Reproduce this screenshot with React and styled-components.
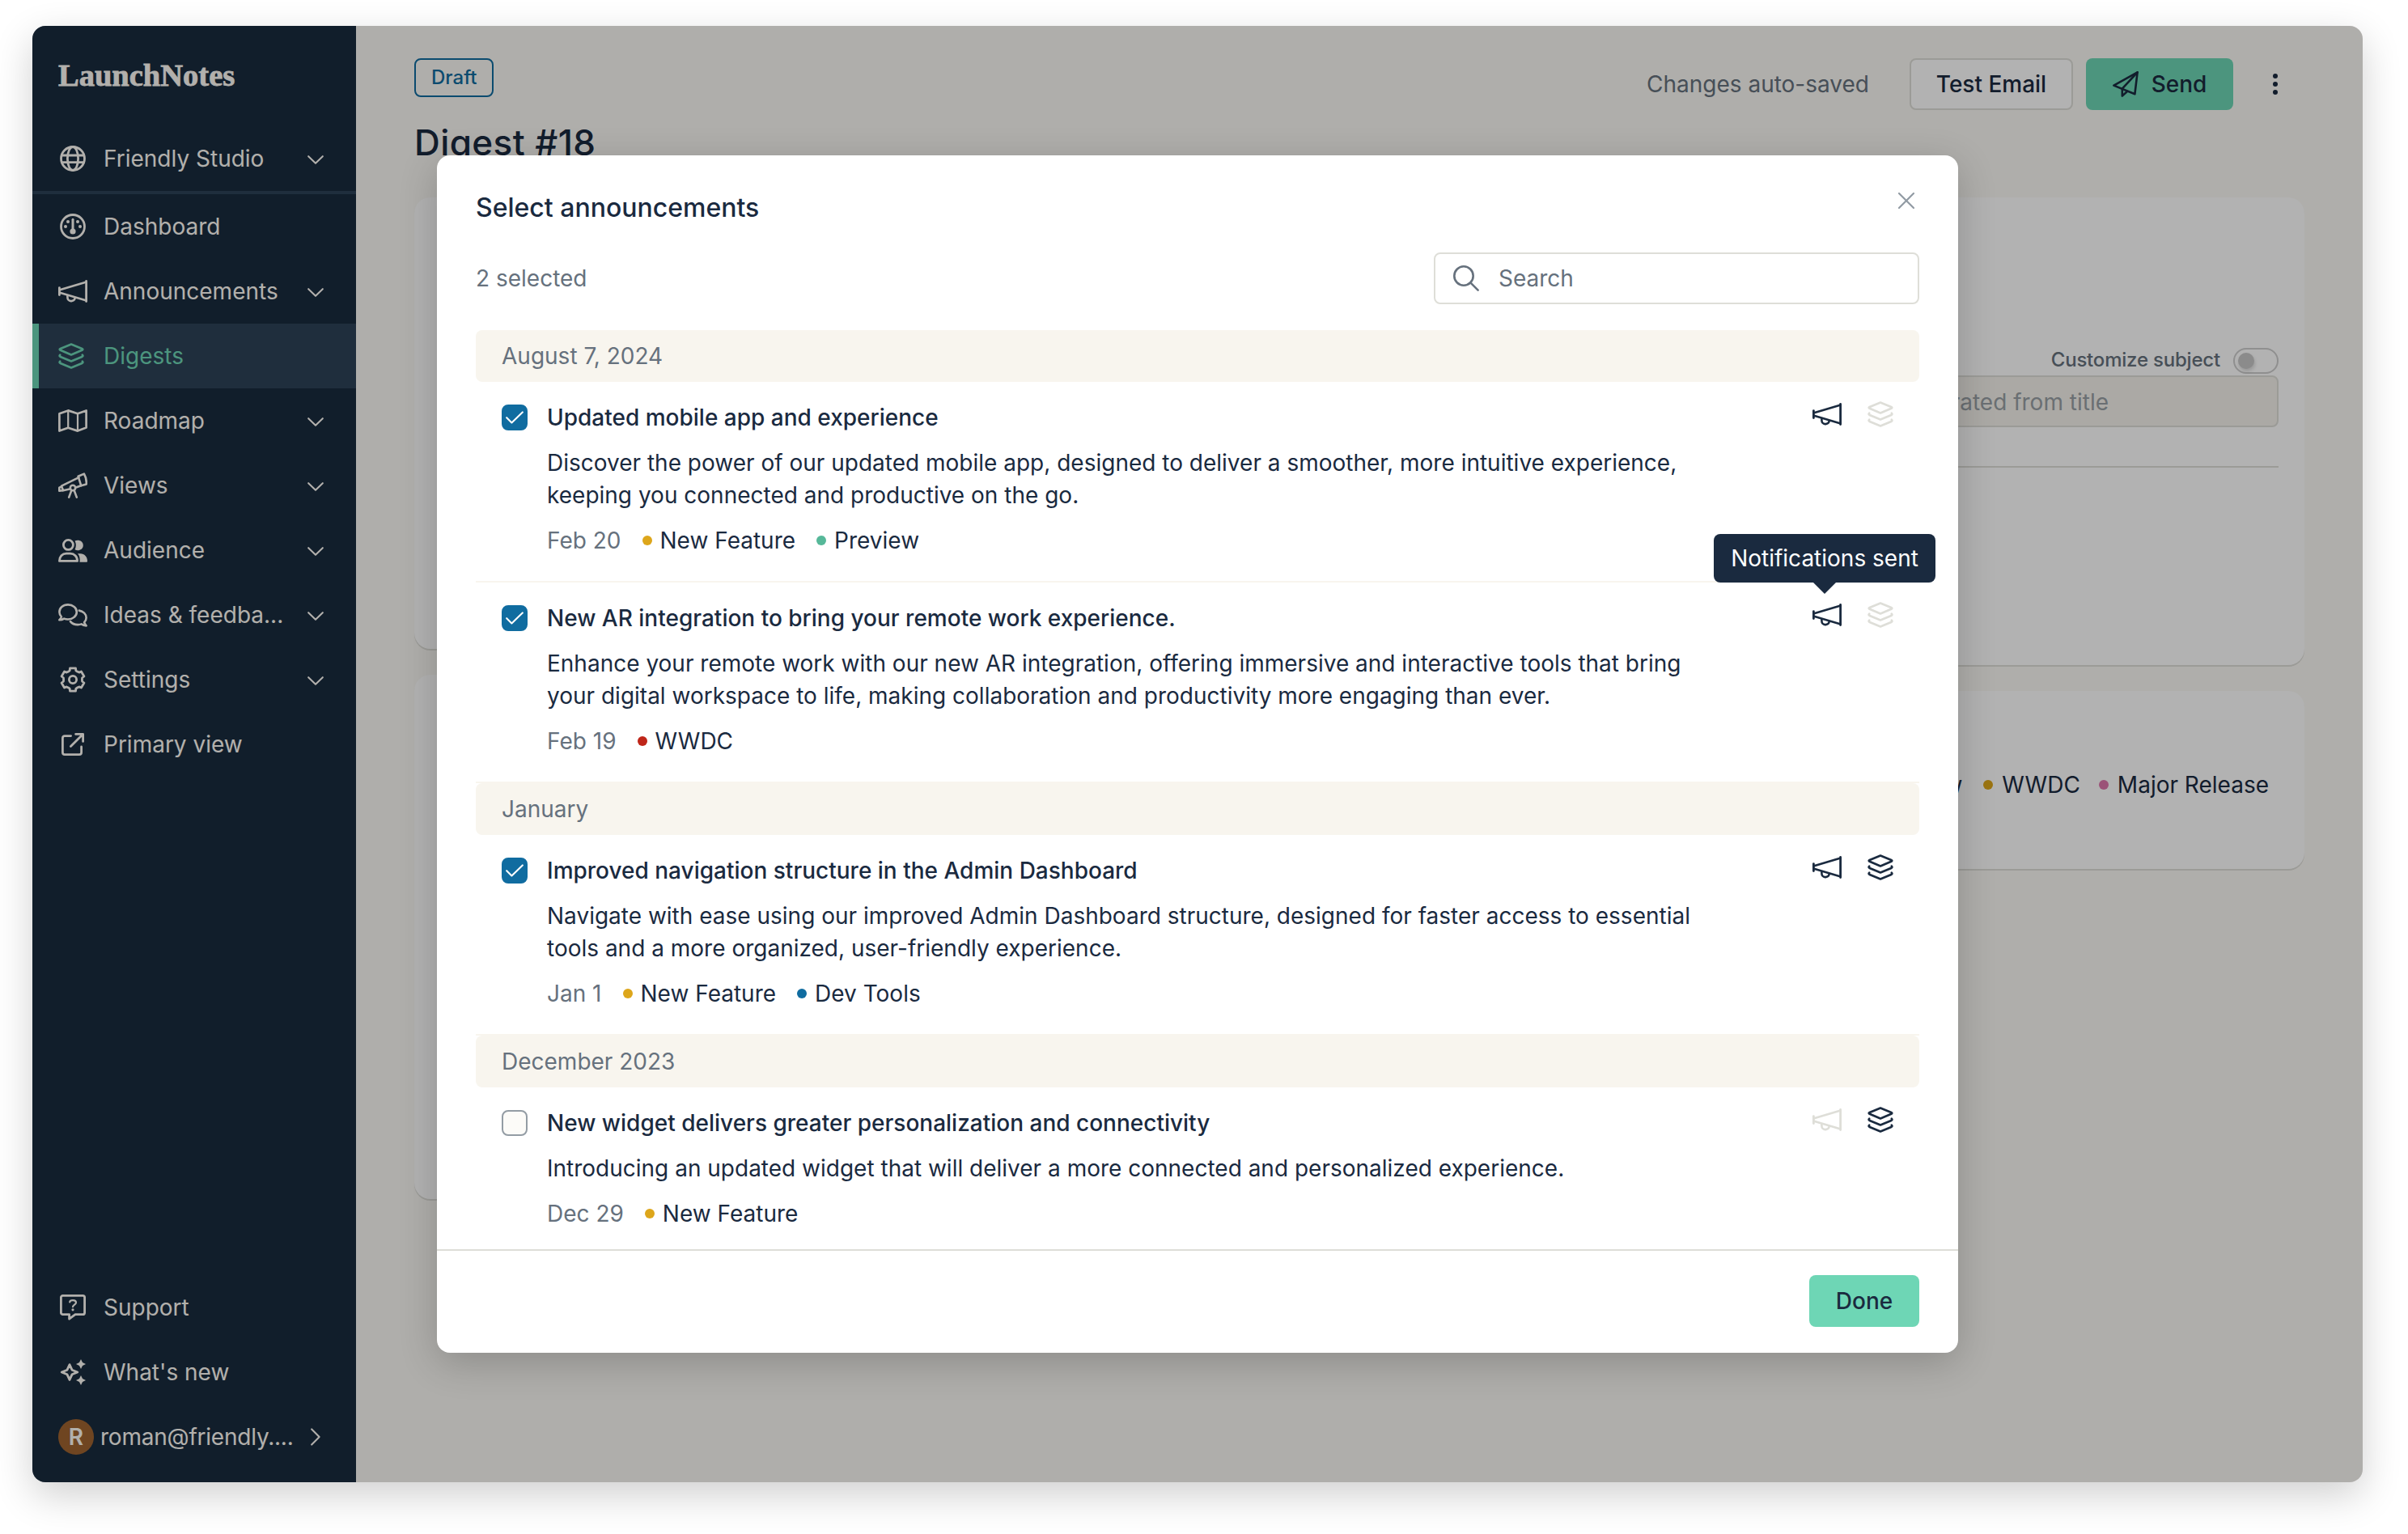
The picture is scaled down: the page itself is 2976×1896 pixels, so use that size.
import React from "react";
import styled, { createGlobalStyle, css } from "styled-components";

/** Vars */
const NAVY = "#1a2a3f";
const MUTED = "#66717d";
const LINE = "#deded8";
const CREAM = "#f8f5ee";
const MINT = "#6ed6b5";
const BLUE = "#106ca0";

const GlobalStyle = createGlobalStyle`
  *, *::before, *::after { box-sizing: border-box; }
  body {
    margin: 0;
    background: #fff;
    font-family: Inter, "Liberation Sans", sans-serif;
    font-size: 28px;
    line-height: 40px;
    color: ${NAVY};
  }
  h1, h2, h3, p { margin: 0; font-size: inherit; font-weight: 400; }
  svg { display: block; flex: none; }
`;

/** Icons */
const Svg = ({ w, h, sw = 2.8, children }) => (
  <svg
    width={w}
    height={h}
    viewBox={`0 0 ${w} ${h}`}
    fill="none"
    stroke="currentColor"
    strokeWidth={sw}
    strokeLinecap="round"
    strokeLinejoin="round"
  >
    {children}
  </svg>
);

const GlobeIcon = () => (
  <Svg w={32} h={32}>
    <circle cx="16" cy="16" r="14.5" />
    <ellipse cx="16" cy="16" rx="6.6" ry="14.5" />
    <path d="M2.4 12h27.2M2.4 20.6h27.2" />
  </Svg>
);

const DashboardIcon = () => (
  <Svg w={32} h={32}>
    <circle cx="16" cy="16" r="14.5" />
    <path d="M16 7.2V20" strokeWidth="3" />
    <g fill="currentColor" stroke="none">
      <circle cx="16" cy="22" r="3.6" />
      <circle cx="7" cy="16" r="2" />
      <circle cx="25" cy="16" r="2" />
      <circle cx="10" cy="10" r="2" />
      <circle cx="22" cy="10" r="2" />
    </g>
  </Svg>
);

const MegaphoneIcon = () => (
  <Svg w={36} h={28}>
    <path d="M34.6 1.4v25.2M1.4 9.6v9" />
    <path d="M2 12.3 34 2.7M2 15.8l32 9.4" strokeWidth="2.6" />
    <path d="M11.4 19.4v2a4.7 4.7 0 0 0 9.3 1" strokeWidth="2.6" />
  </Svg>
);

const LayersIcon = () => (
  <Svg w={32} h={32} sw={2.7}>
    <path d="M16 1.5 29.4 6.9q1.8.9 0 1.9L16 14.5 2.6 8.8q-1.8-1 0-1.9Z" />
    <path d="M2.2 14.7q-1.4 1.4.5 2.2L16 22.5l13.3-5.6q1.9-.8.5-2.2" />
    <path d="M2.2 22.7q-1.4 1.4.5 2.2L16 30.5l13.3-5.6q1.9-.8.5-2.2" />
  </Svg>
);

const MapIcon = () => (
  <Svg w={36} h={28} sw={2.7}>
    <path d="m1.4 5.2 10.8-3.8L24 5.2l10.6-3.8v21L24 26.6l-11.8-3.9-10.8 3.9Z" />
    <path d="M12.2 2v20.4M24 5.4v20.8" strokeWidth="2.2" />
  </Svg>
);

const TelescopeIcon = () => (
  <Svg w={36} h={32} sw={2.6}>
    <path d="m24.6 4.8 7.3-3.2a22 22 0 0 1 2.8 12.8l-6.4 1.9Z" />
    <path d="M25.4 6.2 4 16.6l2 5.6 8-1.6M22.6 18.2l5.4-2" />
    <path d="m3.6 17.8-2.3 1v4l4.2-.6" />
    <circle cx="18" cy="19" r="3.2" />
    <path d="m16.4 22-3.2 8.6M19.6 22l3.2 8.6" />
  </Svg>
);

const AudienceIcon = () => (
  <Svg w={36} h={29}>
    <circle cx="12.4" cy="7.4" r="6" />
    <path d="M1.4 27.4c0-5.6 3.6-9.2 8.6-9.2h4.8c5 0 8.8 3.6 8.8 9.2Z" />
    <g fill="currentColor" stroke="none">
      <path d="M20.6 2.6c3.6-2 10.2-.4 10.2 5.4s-6.8 7.6-10.2 5.2c1.7-3.6 1.7-7 0-10.6Z" />
      <path d="M24 18.2h3.4c5 0 8.6 4 8.6 9.2 0 .8-.5 1.4-1.3 1.4h-8.2c.6-4.6-.1-8-2.5-10.6Z" />
    </g>
  </Svg>
);

const CommentsIcon = () => (
  <Svg w={36} h={29} sw={2.6}>
    <path d="M12 1.4C5.8 1.4 1.4 5.4 1.4 10.4c0 2.4 1 4.3 2.5 5.9-.4 1.6-1.2 2.8-2.5 4 2.3 0 4.2-.6 5.8-1.7 1.4.6 3 .9 4.8.9 6 0 10.8-4.1 10.8-9.1S18 1.4 12 1.4Z" />
    <path d="M25.8 8.6c5 .7 8.8 4.3 8.8 8.8 0 2.3-.9 4.2-2.5 5.7.4 1.6 1.3 3 2.5 4.3-2.4-.1-4.4-.8-6-2-1.3.5-2.8.7-4.4.7-4.2 0-7.4-1.6-9.2-4" />
  </Svg>
);

// Outline of a six-tooth cog
const cogPoints = [0, 1, 2, 3, 4, 5]
  .flatMap((k) =>
    [
      [-31, 11.4],
      [-19, 11.8],
      [-14, 14.5],
      [14, 14.5],
      [19, 11.8],
    ].map(([deg, r]) => {
      const a = ((k * 60 - 90 + deg) * Math.PI) / 180;
      return `${(16 + r * Math.cos(a)).toFixed(2)},${(16 + r * Math.sin(a)).toFixed(2)}`;
    })
  )
  .join(" ");

const CogIcon = () => (
  <Svg w={32} h={32}>
    <polygon points={cogPoints} />
    <circle cx="16" cy="16" r="4.6" />
  </Svg>
);

const ExternalIcon = () => (
  <Svg w={28} h={28} sw={2.8}>
    <path d="M11.6 3.6H4A2.6 2.6 0 0 0 1.4 6.2V24A2.6 2.6 0 0 0 4 26.6h18A2.6 2.6 0 0 0 24.6 24v-7" />
    <path d="M17.6 1.4h9v9M26 2 11.4 16.6" />
  </Svg>
);

const SupportIcon = () => (
  <Svg w={32} h={32}>
    <path d="M3.6 1.4h24.8a2.2 2.2 0 0 1 2.2 2.2v18.8a2.2 2.2 0 0 1-2.2 2.2H19l-7.4 5.6v-5.6h-8a2.2 2.2 0 0 1-2.2-2.2V3.6a2.2 2.2 0 0 1 2.2-2.2Z" />
    <path d="M12.2 9.4c.4-3.2 7.8-3.2 7.8.6 0 2.6-4 2.6-4 5.2" strokeWidth="2.2" />
    <circle cx="16" cy="18.8" r="1.6" fill="currentColor" stroke="none" />
  </Svg>
);

const SparklesIcon = () => (
  <Svg w={32} h={32}>
    <path d="m12 6.6 3 6.6 6.8 2.8-6.8 2.8-3 6.6-3-6.6L2.2 16 9 13.2Z" />
    <g fill="currentColor" stroke="none">
      <path d="m26 0 2 4 4 2-4 2-2 4-2-4-4-2 4-2ZM26 20l2 4 4 2-4 2-2 4-2-4-4-2 4-2Z" />
    </g>
  </Svg>
);

const ChevronDown = () => (
  <Svg w={20} h={12} sw={2.1}>
    <path d="m1.2 1.2 8.8 8.6 8.8-8.6" />
  </Svg>
);

const ChevronRight = () => (
  <Svg w={12} h={22} sw={2.1}>
    <path d="m1.2 1.4 9.4 9.6-9.4 9.6" />
  </Svg>
);

const SearchIcon = () => (
  <Svg w={32} h={32} sw={2.6}>
    <circle cx="13" cy="13" r="11.7" />
    <path d="m21.6 21.6 9 9" />
  </Svg>
);

const CloseIcon = () => (
  <Svg w={20} h={20} sw={2.2}>
    <path d="m1 1 18 18M19 1 1 19" />
  </Svg>
);

const PlaneIcon = () => (
  <Svg w={32} h={32} sw={2.6}>
    <path d="M30.6 1.4 1.4 17.6l26 10.6Z" />
    <path d="M30.6 1.4 11.8 21.6v9l6.2-5.6" />
  </Svg>
);

const MoreIcon = () => (
  <svg width="6" height="26" viewBox="0 0 6 26" fill="currentColor">
    <circle cx="3" cy="3" r="3" />
    <circle cx="3" cy="13" r="3" />
    <circle cx="3" cy="23" r="3" />
  </svg>
);

const CheckIcon = () => (
  <Svg w={22} h={16} sw={2.1}>
    <path d="m1.2 8.2 6.2 6.2L20.8 1.4" />
  </Svg>
);

/** Frame */
const Page = styled.div`
  width: 2976px;
  height: 1896px;
  padding: 32px 56px 64px 40px;
  overflow: hidden;
`;
const Window = styled.div`
  position: relative;
  display: flex;
  height: 100%;
  border-radius: 16px;
  background: #fbf9f5;
  box-shadow: 0 16px 48px rgba(0, 0, 0, 0.19);
`;

/** Sidebar */
const Sidebar = styled.nav`
  display: flex;
  flex-direction: column;
  width: 400px;
  padding: 36px 0 16px;
  border-radius: 16px 0 0 16px;
  background: #192b3e;
  color: #fffcf7;
`;
const Logo = styled.div`
  height: 88px;
  padding-left: 32px;
  font: bold 38.5px/50px "Liberation Serif", serif;
  -webkit-text-stroke: 0.8px currentColor;
`;
const NavItem = styled.a`
  display: flex;
  align-items: center;
  height: 80px;
  padding: 0 40px 0 32px;
  ${({ $active }) =>
    $active &&
    css`
      background: #2d4258;
      box-shadow: inset 8px 0 0 ${MINT};
      color: ${MINT};
    `}
  ${({ $divided }) =>
    $divided &&
    css`
      height: 84px;
      border-bottom: 4px solid #2d4258;
    `}
`;
const NavIcon = styled.span`
  display: flex;
  justify-content: ${({ $start }) => ($start ? "flex-start" : "center")};
  width: 36px;
  margin-right: 20px;
`;
const NavLabel = styled.span`
  flex: 1;
  letter-spacing: ${({ $tight }) => ($tight ? "-0.22px" : "normal")};
`;
const Spacer = styled.div`
  flex: 1;
`;
const Avatar = styled.span`
  display: flex;
  align-items: center;
  justify-content: center;
  width: 44px;
  height: 44px;
  margin-right: 8px;
  border-radius: 50%;
  background: #a06430;
  font-weight: 600;
`;
const ChevronSlot = styled.span`
  display: flex;
  justify-content: center;
  width: 20px;
  padding-top: ${({ $down }) => ($down ? 3 : 0)}px;
`;

/** Page content */
const Main = styled.main`
  flex: 1;
  padding: 40px 72px 0;
`;
const Header = styled.header`
  display: flex;
  justify-content: space-between;
  align-items: flex-start;
  height: 172px;
`;
const Badge = styled.span`
  display: inline-flex;
  align-items: center;
  height: 48px;
  padding: 0 18px 0 19px;
  border: 2px solid ${BLUE};
  border-radius: 8px;
  font-size: 24px;
  font-weight: 500;
  color: ${BLUE};
`;
const Heading = styled.div`
  display: flex;
  flex-direction: column;
  align-items: flex-start;
  gap: 30px;
`;
const PageTitle = styled.h1`
  font-size: 44px;
  line-height: 52px;
  font-weight: 500;
  letter-spacing: 0.4px;
`;
const Actions = styled.div`
  display: flex;
  align-items: center;
  gap: 16px;
`;
const SaveState = styled.span`
  margin-right: 34px;
  color: ${MUTED};
`;
const Button = styled.button`
  display: flex;
  align-items: center;
  justify-content: center;
  gap: 16px;
  width: ${({ $width }) => $width}px;
  height: 64px;
  padding: 0;
  border: ${({ $outlined }) => ($outlined ? `2px solid ${LINE}` : 0)};
  border-radius: 8px;
  background: ${({ $outlined }) => ($outlined ? "#fff" : MINT)};
  font: 500 28px/40px Inter, sans-serif;
  color: ${NAVY};
`;
const MoreButton = styled.span`
  display: flex;
  justify-content: center;
  width: 72px;
`;
const Columns = styled.div`
  display: grid;
  grid-template-columns: 1100px 1fr;
  align-items: start;
  gap: 32px;
`;
const Column = styled.div`
  display: flex;
  flex-direction: column;
  gap: 32px;
`;
const Card = styled.section`
  height: ${({ $height }) => $height}px;
  padding: 0 32px;
  border-radius: 20px;
  background: #fff;
  box-shadow: 0 2px 0 ${LINE};
`;
const SubjectBlock = styled.div`
  display: flex;
  flex-direction: column;
  padding: 182px 0 48px;
  border-bottom: 2px solid ${LINE};
`;
const ToggleRow = styled.div`
  display: flex;
  justify-content: flex-end;
  align-items: center;
  gap: 16px;
  height: 38px;
  font-size: 24px;
  font-weight: 500;
  letter-spacing: -0.2px;
  color: ${MUTED};
`;
const Toggle = styled.span`
  width: 56px;
  height: 32px;
  margin-top: 2px;
  padding: 4px;
  border: 2px solid #cdcdcd;
  border-radius: 16px;
  &::before {
    content: "";
    display: block;
    width: 20px;
    height: 20px;
    border-radius: 50%;
    background: #c7c7c7;
    box-shadow: 1px 3px 4px rgba(0, 0, 0, 0.15);
  }
`;
const SubjectInput = styled.div`
  display: flex;
  align-items: center;
  justify-content: flex-end;
  height: 64px;
  padding: 1px 208px 0 22px;
  border: 2px solid ${LINE};
  border-radius: 8px;
  background: #f5f3ec;
  color: #98a0a5;
`;
const CardTags = styled.div`
  display: flex;
  justify-content: flex-end;
  padding: 96px 12px 0;
`;

/** Modal */
const Overlay = styled.div`
  position: absolute;
  inset: 0;
  display: flex;
  align-items: center;
  justify-content: center;
  border-radius: 16px;
  background: rgba(0, 0, 0, 0.3);
`;
const Modal = styled.div`
  display: flex;
  flex-direction: column;
  width: 1880px;
  height: 1480px;
  border-radius: 16px;
  background: #fff;
  box-shadow: 0 12px 48px rgba(0, 0, 0, 0.2);
`;
const ModalHeader = styled.div`
  display: flex;
  justify-content: space-between;
  height: 120px;
  padding: 45px 54px 0 48px;
  color: #929ba4;
`;
const ModalTitle = styled.h2`
  font-size: 32px;
  font-weight: 500;
  color: ${NAVY};
`;
const CloseButton = styled.span`
  padding-top: 1px;
`;
const Toolbar = styled.div`
  display: flex;
  align-items: center;
  justify-content: space-between;
  margin-bottom: 32px;
  padding: 0 48px;
  color: ${MUTED};
`;
const SearchBox = styled.div`
  display: flex;
  align-items: center;
  gap: 24px;
  width: 600px;
  height: 64px;
  padding: 0 22px;
  border: 2px solid ${LINE};
  border-radius: 8px;
`;
const List = styled.div`
  flex: 1;
  min-height: 0;
  padding: 0 48px;
  overflow: hidden;
`;
const GroupTitle = styled.h3`
  height: 64px;
  padding: 12px 32px;
  border-radius: 8px;
  background: ${CREAM};
  color: ${MUTED};
`;
const Row = styled.article`
  display: flex;
  align-items: flex-start;
  padding: 24px 32px 30px;
  border-bottom: 2px solid ${CREAM};
`;
const Checkbox = styled.span`
  display: flex;
  align-items: center;
  justify-content: center;
  width: 32px;
  height: 32px;
  margin: 4px 24px 0 0;
  border: 2px solid ${({ $checked }) => ($checked ? BLUE : "#939ca4")};
  border-radius: 8px;
  background: ${({ $checked }) => ($checked ? BLUE : "#fcfbf8")};
  color: #fff;
`;
const RowBody = styled.div`
  display: flex;
  flex-direction: column;
  gap: 16px;
  width: 1440px;
`;
const RowTitle = styled.h3`
  font-weight: 500;
`;
const Meta = styled.div`
  display: flex;
  gap: 26px;
`;
const DateText = styled.span`
  color: ${MUTED};
`;
const TagLabel = styled.span`
  display: flex;
  align-items: center;
  gap: ${({ $gap }) => $gap}px;
  margin-right: ${({ $after }) => $after || 0}px;
  &::before {
    content: "";
    width: 12px;
    height: 12px;
    border-radius: 50%;
    background: ${({ $color }) => $color};
  }
`;
const Channels = styled.div`
  display: flex;
  align-items: center;
  gap: 32px;
  height: 32px;
  margin-left: auto;
`;
const Channel = styled.span`
  position: relative;
  color: ${({ $on }) => ($on ? NAVY : LINE)};
`;
const Tooltip = styled.span`
  position: absolute;
  bottom: calc(100% + 26px);
  left: calc(50% - 3px);
  width: 274px;
  height: 60px;
  padding: 10px 0;
  border-radius: 8px;
  background: ${NAVY};
  color: #fff;
  text-align: center;
  white-space: nowrap;
  transform: translateX(-50%);
  &::after {
    content: "";
    position: absolute;
    top: 100%;
    left: calc(50% - 14px);
    border: 14px solid transparent;
    border-top-color: ${NAVY};
    border-bottom: 0;
  }
`;
const ModalFooter = styled.div`
  display: flex;
  align-items: center;
  justify-content: flex-end;
  height: 128px;
  padding: 0 48px 2px;
  border-top: 2px solid ${LINE};
`;

/** Data */
const YELLOW = "#dda61b";

const NAV = [
  { label: "Friendly Studio", icon: GlobeIcon, menu: true, divided: true },
  { label: "Dashboard", icon: DashboardIcon },
  { label: "Announcements", icon: MegaphoneIcon, menu: true },
  { label: "Digests", icon: LayersIcon, active: true },
  { label: "Roadmap", icon: MapIcon, menu: true },
  { label: "Views", icon: TelescopeIcon, menu: true },
  { label: "Audience", icon: AudienceIcon, menu: true },
  { label: "Ideas & feedba...", icon: CommentsIcon, menu: true },
  { label: "Settings", icon: CogIcon, menu: true },
  { label: "Primary view", icon: ExternalIcon },
];

const NAV_BOTTOM = [
  { label: "Support", icon: SupportIcon },
  { label: "What's new", icon: SparklesIcon },
];

const GROUPS = [
  {
    title: "August 7, 2024",
    items: [
      {
        title: "Updated mobile app and experience",
        text: "Discover the power of our updated mobile app, designed to deliver a smoother, more intuitive experience, keeping you connected and productive on the go.",
        date: "Feb 20",
        tags: [["New Feature", YELLOW], ["Preview", "#56b899"]],
        checked: true,
        notified: true,
      },
      {
        title: "New AR integration to bring your remote work experience.",
        text: "Enhance your remote work with our new AR integration, offering immersive and interactive tools that bring your digital workspace to life, making collaboration and productivity more engaging than ever.",
        date: "Feb 19",
        tags: [["WWDC", "#bf2619"]],
        checked: true,
        notified: true,
        tooltip: "Notifications sent",
      },
    ],
  },
  {
    title: "January",
    items: [
      {
        title: "Improved navigation structure in the Admin Dashboard",
        text: "Navigate with ease using our improved Admin Dashboard structure, designed for faster access to essential tools and a more organized, user-friendly experience.",
        date: "Jan 1",
        tags: [["New Feature", YELLOW], ["Dev Tools", BLUE]],
        checked: true,
        notified: true,
        digested: true,
      },
    ],
  },
  {
    title: "December 2023",
    items: [
      {
        title: "New widget delivers greater personalization and connectivity",
        text: "Introducing an updated widget that will deliver a more connected and personalized experience.",
        date: "Dec 29",
        tags: [["New Feature", YELLOW]],
        digested: true,
      },
    ],
  },
];

const NavLink = ({ item }) => {
  const Icon = item.icon;
  return (
    <NavItem $active={item.active} $divided={item.divided}>
      <NavIcon $start={item.active}>
        <Icon />
      </NavIcon>
      <NavLabel>{item.label}</NavLabel>
      {item.menu && (
        <ChevronSlot $down>
          <ChevronDown />
        </ChevronSlot>
      )}
    </NavItem>
  );
};

const Announcement = ({ item }) => (
  <Row>
    <Checkbox $checked={item.checked}>{item.checked && <CheckIcon />}</Checkbox>
    <RowBody>
      <RowTitle>{item.title}</RowTitle>
      <p>{item.text}</p>
      <Meta>
        <DateText>{item.date}</DateText>
        {item.tags.map(([name, color]) => (
          <TagLabel key={name} $color={color} $gap={10}>
            {name}
          </TagLabel>
        ))}
      </Meta>
    </RowBody>
    <Channels>
      <Channel $on={item.notified}>
        <MegaphoneIcon />
        {item.tooltip && <Tooltip>{item.tooltip}</Tooltip>}
      </Channel>
      <Channel $on={item.digested}>
        <LayersIcon />
      </Channel>
    </Channels>
  </Row>
);

/** Exports */
export default function App() {
  return (
    <Page>
      <GlobalStyle />
      <Window>
        <Sidebar>
          <Logo>LaunchNotes</Logo>
          {NAV.map((item) => (
            <NavLink key={item.label} item={item} />
          ))}
          <Spacer />
          {NAV_BOTTOM.map((item) => (
            <NavLink key={item.label} item={item} />
          ))}
          <NavItem>
            <Avatar>R</Avatar>
            <NavLabel $tight>roman@friendly....</NavLabel>
            <ChevronSlot>
              <ChevronRight />
            </ChevronSlot>
          </NavItem>
        </Sidebar>

        <Main>
          <Header>
            <Heading>
              <Badge>Draft</Badge>
              <PageTitle>Digest #18</PageTitle>
            </Heading>
            <Actions>
              <SaveState>Changes auto-saved</SaveState>
              <Button $outlined $width={202}>
                Test Email
              </Button>
              <Button $width={182}>
                <PlaneIcon />
                Send
              </Button>
              <MoreButton>
                <MoreIcon />
              </MoreButton>
            </Actions>
          </Header>
          <Columns>
            <Column>
              <Card $height={558} />
              <Card $height={648} />
            </Column>
            <Column>
              <Card $height={578}>
                <SubjectBlock>
                  <ToggleRow>
                    Customize subject
                    <Toggle />
                  </ToggleRow>
                  <SubjectInput>Auto-generated from title</SubjectInput>
                </SubjectBlock>
              </Card>
              <Card $height={220}>
                <CardTags>
                  <TagLabel $color="#56b899" $gap={11} $after={26}>
                    Preview
                  </TagLabel>
                  <TagLabel $color={YELLOW} $gap={11} $after={23}>
                    WWDC
                  </TagLabel>
                  <TagLabel $color="#df77ad" $gap={11}>
                    Major Release
                  </TagLabel>
                </CardTags>
              </Card>
            </Column>
          </Columns>
        </Main>

        <Overlay>
          <Modal>
            <ModalHeader>
              <ModalTitle>Select announcements</ModalTitle>
              <CloseButton>
                <CloseIcon />
              </CloseButton>
            </ModalHeader>
            <Toolbar>
              <span>2 selected</span>
              <SearchBox>
                <SearchIcon />
                Search
              </SearchBox>
            </Toolbar>
            <List>
              {GROUPS.map((group) => (
                <React.Fragment key={group.title}>
                  <GroupTitle>{group.title}</GroupTitle>
                  {group.items.map((item) => (
                    <Announcement key={item.title} item={item} />
                  ))}
                </React.Fragment>
              ))}
            </List>
            <ModalFooter>
              <Button $width={136}>Done</Button>
            </ModalFooter>
          </Modal>
        </Overlay>
      </Window>
    </Page>
  );
}
